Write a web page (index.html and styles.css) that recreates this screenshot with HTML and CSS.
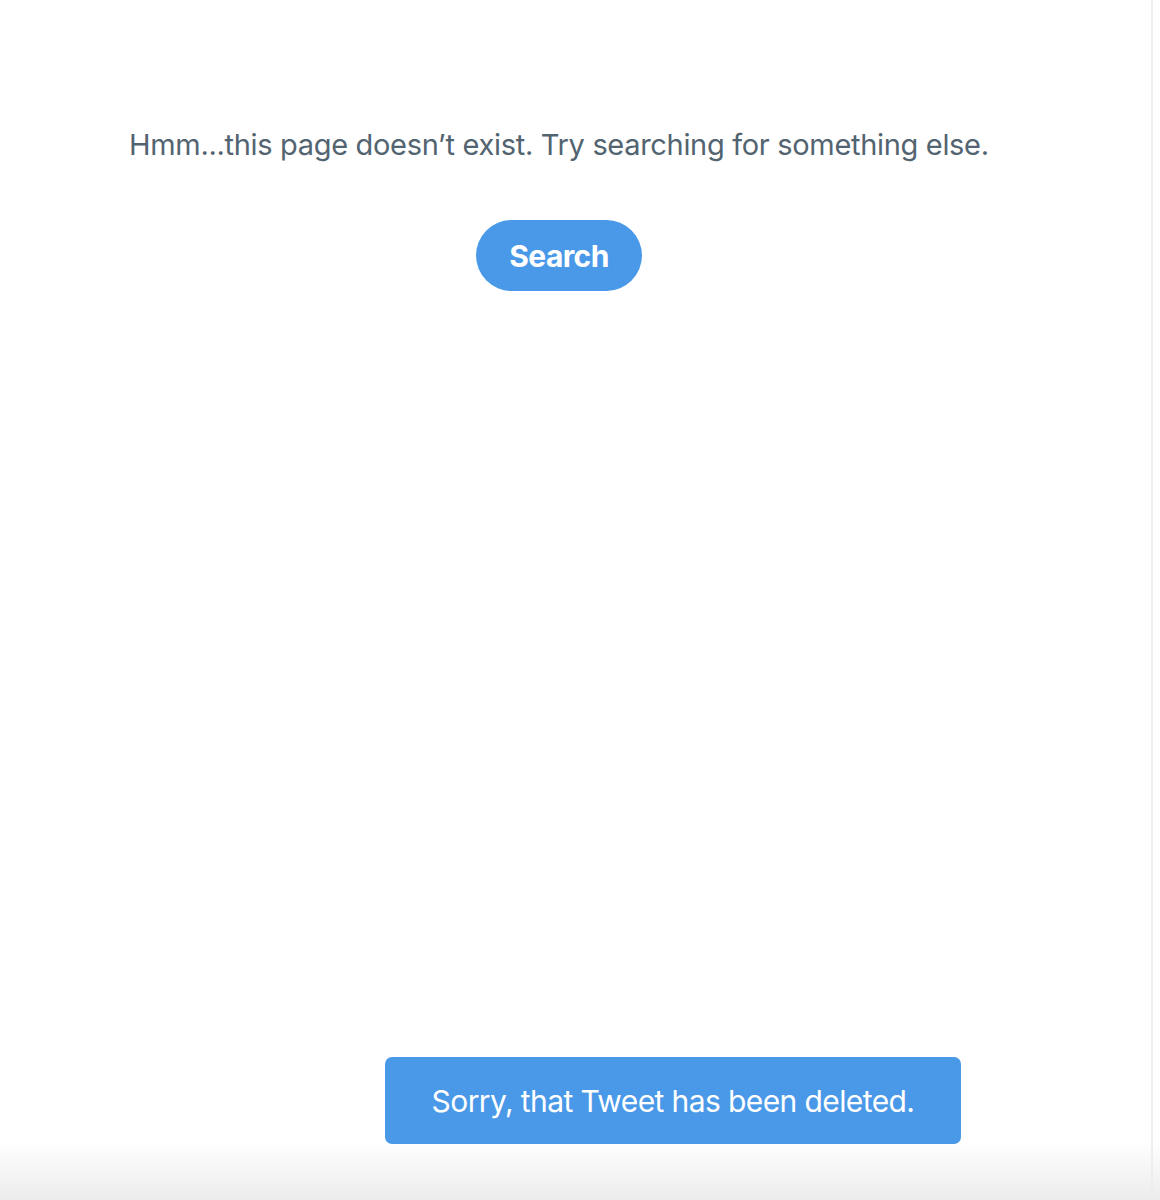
FILE: index.html
```html
<!DOCTYPE html>
<html>
<head>
<meta charset="utf-8">
<link rel="stylesheet" href="styles.css">
</head>
<body>
<div class="page">
  <main class="column">
    <p class="message">Hmm...this page doesn’t exist. Try searching for something else.</p>
    <div class="actions"><button class="search-btn">Search</button></div>
  </main>
  <div class="divider"></div>
</div>
<div class="toast">Sorry, that Tweet has been deleted.</div>
<div class="fade"></div>
</body>
</html>
```

FILE: styles.css
```css
html, body {
  margin: 0;
  padding: 0;
  background: #ffffff;
  font-family: Inter, "Noto Sans", sans-serif;
}
.page {
  display: flex;
  height: 1200px;
}
.column {
  width: 1151px;
  padding-top: 123px;
  box-sizing: border-box;
}
.message {
  margin: 0 0 0 129px;
  font-size: 29px;
  line-height: 44px;
  color: #536471;
  letter-spacing: -0.32px;
}
.actions {
  display: flex;
  justify-content: flex-start;
  margin-top: 53px;
  padding-left: 476px;
}
.search-btn {
  width: 166px;
  height: 71px;
  border: none;
  border-radius: 36px;
  background: #4a99e8;
  color: #ffffff;
  font-family: Inter, "Noto Sans", sans-serif;
  font-weight: 700;
  font-size: 30px;
  letter-spacing: -0.6px;
  padding: 0;
}
.divider {
  width: 2px;
  background: #efefef;
}
.toast {
  position: absolute;
  left: 385px;
  top: 1057px;
  width: 576px;
  height: 87px;
  border-radius: 7px;
  background: #4a99e8;
  color: #ffffff;
  font-size: 30px;
  letter-spacing: -0.6px;
  display: flex;
  align-items: center;
  justify-content: center;
  z-index: 2;
}
.fade {
  position: absolute;
  left: 0;
  top: 1140px;
  width: 1160px;
  height: 60px;
  background: linear-gradient(to bottom, rgba(239,239,239,0), #ececec);
  z-index: 1;
}
```
